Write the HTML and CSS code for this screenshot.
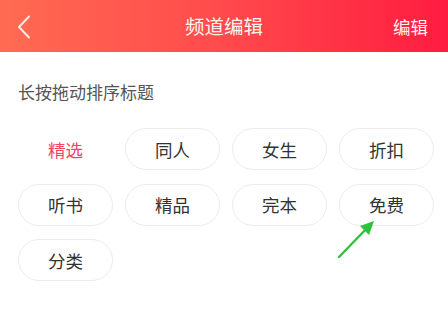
FILE: index.html
```html
<!DOCTYPE html>
<html lang="zh">
<head>
<meta charset="utf-8">
<link rel="stylesheet" href="styles.css">
</head>
<body>
<div class="page">
  <header class="topbar">
    <span class="back">
      <svg width="14" height="24" viewBox="0 0 14 24"><path d="M12 1.5 L2 12 L12 22.5" fill="none" stroke="#ffe9e3" stroke-width="2" stroke-linecap="round" stroke-linejoin="round"/></svg>
    </span>
    <span class="title">频道编辑</span>
    <span class="action">编辑</span>
  </header>
  <div class="hint">长按拖动排序标题</div>
  <div class="grid">
    <div class="chip active">精选</div>
    <div class="chip">同人</div>
    <div class="chip">女生</div>
    <div class="chip">折扣</div>
    <div class="chip">听书</div>
    <div class="chip">精品</div>
    <div class="chip">完本</div>
    <div class="chip">免费</div>
    <div class="chip">分类</div>
  </div>
  <svg class="arrow" width="50" height="50" viewBox="0 0 50 50">
    <line x1="5" y1="42" x2="36" y2="10" stroke="#2ec13c" stroke-width="2.4" stroke-linecap="round"/>
    <polygon points="40,6 26,11 35,20" fill="#2ec13c"/>
  </svg>
</div>
</body>
</html>
```
FILE: styles.css
```css
html, body {
  margin: 0;
  padding: 0;
  background: #ffffff;
}
body {
  font-family: "Noto Sans CJK SC", "Noto Sans", sans-serif;
  width: 448px;
  height: 328px;
  overflow: hidden;
}
.page {
  position: relative;
  width: 448px;
  height: 328px;
}
.topbar {
  height: 52px;
  background: linear-gradient(90deg, #ff6b52 0%, #ff4a4c 50%, #ff1c40 100%);
  display: flex;
  align-items: center;
  position: relative;
  color: #fff;
}
.back {
  display: flex;
  margin-left: 17px;
  margin-top: 1px;
}
.title {
  position: absolute;
  left: 0;
  right: 0;
  text-align: center;
  font-size: 19.5px;
  line-height: 52px;
  color: #fff3ef;
  pointer-events: none;
}
.action {
  margin-left: auto;
  margin-right: 20px;
  font-size: 17.5px;
  color: #fff3ef;
}
.hint {
  margin: 28px 0 0 18px;
  font-size: 17px;
  line-height: 24px;
  color: #555555;
}
.grid {
  margin: 24px 0 0 18px;
  display: grid;
  grid-template-columns: repeat(4, 95px);
  column-gap: 12px;
  row-gap: 13.5px;
}
.chip {
  height: 42px;
  box-sizing: border-box;
  border: 1px solid #ececec;
  border-radius: 21px;
  display: flex;
  align-items: center;
  justify-content: center;
  font-size: 17.5px;
  color: #333333;
}
.chip.active {
  border-color: transparent;
  color: #f2475b;
}
.arrow {
  position: absolute;
  left: 334px;
  top: 215px;
}
```
